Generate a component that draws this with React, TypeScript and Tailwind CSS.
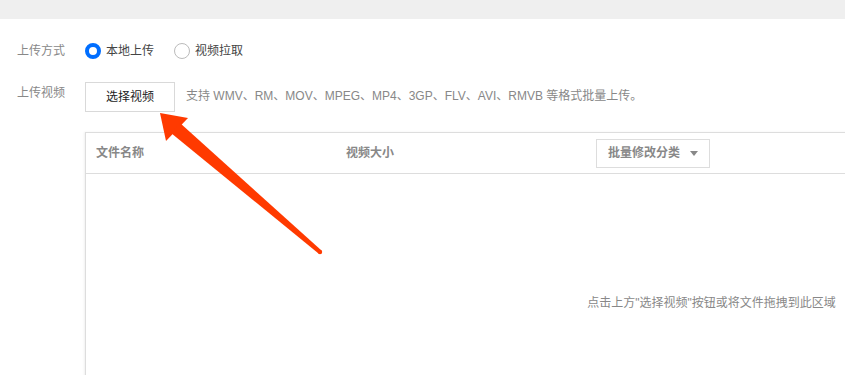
import React from "react";

const font = { fontFamily: '"Liberation Sans", "Noto Sans CJK SC", "Noto Sans", sans-serif' };

export default function App() {
  return (
    <div
      className="relative w-[845px] h-[375px] overflow-hidden bg-white text-[12px]"
      style={font}
    >
      <div className="h-[19px] bg-[#efefef]" />
      <div className="pl-[17px] pt-[22px]">
        <div className="flex items-center h-[20px]">
          <span className="w-[68px] text-[#888] leading-[20px]">上传方式</span>
          <label className="flex items-center">
            <span className="w-[16px] h-[16px] rounded-full border-[4px] border-[#006eff] bg-white" />
            <span className="ml-[5px] text-[#444]">本地上传</span>
          </label>
          <label className="flex items-center ml-[20px]">
            <span className="w-[16px] h-[16px] rounded-full border border-[#bbb] bg-white" />
            <span className="ml-[5px] text-[#444]">视频拉取</span>
          </label>
        </div>
        <div className="flex mt-[21px]">
          <span className="w-[68px] text-[#888] leading-[20px] pt-[1px]">上传视频</span>
          <button className="w-[90px] h-[30px] border border-[#d9d9d9] bg-white text-[#222] text-[12px] leading-[28px]">
            选择视频
          </button>
          <span className="ml-[11px] text-[#888] leading-[20px] pt-[4px]">
            支持 WMV、RM、MOV、MPEG、MP4、3GP、FLV、AVI、RMVB 等格式批量上传。
          </span>
        </div>
        <div className="ml-[68px] mt-[20px] w-[1253px] border border-[#ddd] shadow-[-1px_0_2px_rgba(0,0,0,0.06)]">
          <div className="flex items-center h-[41px] border-b border-[#ddd] text-[#888] font-bold">
            <div className="w-[250px] pl-[10px]">文件名称</div>
            <div className="w-[250px] pl-[10px]">视频大小</div>
            <div className="pl-[10px]">
              <div className="flex items-center justify-between w-[114px] h-[29px] border border-[#ddd] px-[11px]">
                <span>批量修改分类</span>
                <svg width="8" height="5" viewBox="0 0 8 5">
                  <path d="M0 0 L8 0 L4 5 Z" fill="#888" />
                </svg>
              </div>
            </div>
          </div>
          <div className="h-[258px] flex items-center justify-center text-[#888]">
            <span>
              点击上方<span>"</span>选择视频<span>"</span>按钮或将文件拖拽到此区域
            </span>
          </div>
        </div>
      </div>
      <svg
        className="absolute left-0 top-0 pointer-events-none"
        width="845"
        height="375"
        viewBox="0 0 845 375"
      >
        <polygon points="160,113 188,118 166,141" fill="#ff3a00" />
        <polygon points="171,133 180,123 321.5,250.5 318.5,253.5" fill="#ff3a00" />
        <circle cx="320" cy="252" r="2.2" fill="#ff3a00" />
      </svg>
    </div>
  );
}
